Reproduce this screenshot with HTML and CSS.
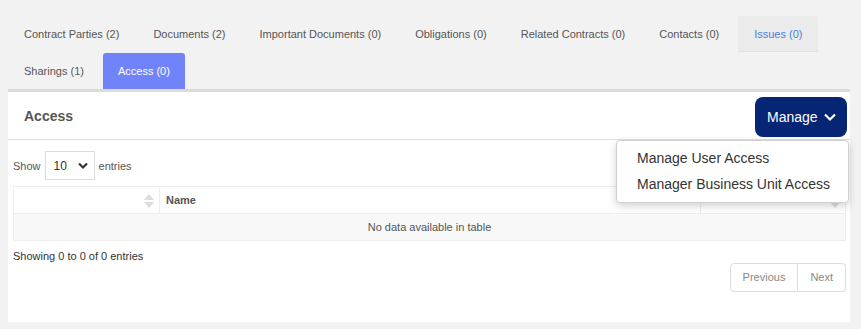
FILE: index.html
```html
<!DOCTYPE html>
<html>
	<head>
		<meta charset="utf-8" />
		<title>Access</title>
		<link rel="stylesheet" href="styles.css">
	</head>
	<body>
		<!--tabs-->
		<ul class="tabs">
			<li><a href="javascript:;">Contract Parties (2)</a></li>
			<li><a href="javascript:;">Documents (2)</a></li>
			<li><a href="javascript:;">Important Documents (0)</a></li>
			<li><a href="javascript:;">Obligations (0)</a></li>
			<li><a href="javascript:;">Related Contracts (0)</a></li>
			<li><a href="javascript:;">Contacts (0)</a></li>
			<li class="hover"><a href="javascript:;">Issues (0)</a></li>
			<li class="break"></li>
			<li><a href="javascript:;">Sharings (1)</a></li>
			<li class="current"><a href="javascript:;">Access (0)</a></li>
		</ul>
		<!--panel-->
		<div class="panel">
			<div class="panel-head">
				<h3>Access</h3>
				<div class="manage">
					<button class="manage-btn">Manage
						<svg width="14" height="10" viewBox="0 0 14 10"><path d="M2 2.5 L7 7.5 L12 2.5" fill="none" stroke="#fff" stroke-width="2.2"/></svg>
					</button>
					<ul class="menu">
						<li><a href="javascript:;">Manage User Access</a></li>
						<li><a href="javascript:;">Manager Business Unit Access</a></li>
					</ul>
				</div>
			</div>
			<div class="panel-body">
				<div class="length">
					<span>Show</span>
					<div class="select">
						<span>10</span>
						<svg width="12" height="8" viewBox="0 0 12 8"><path d="M2 1.5 L6 5.5 L10 1.5" fill="none" stroke="#333" stroke-width="2.2"/></svg>
					</div>
					<span>entries</span>
				</div>
				<table class="grid">
					<thead>
						<tr>
							<th class="c1"><i class="sort"></i></th>
							<th class="c2">Name</th>
							<th class="c3"><i class="sort down"></i></th>
						</tr>
					</thead>
					<tbody>
						<tr><td colspan="3" class="empty">No data available in table</td></tr>
					</tbody>
				</table>
				<p class="info">Showing 0 to 0 of 0 entries</p>
				<div class="pager">
					<a href="javascript:;">Previous</a><a href="javascript:;">Next</a>
				</div>
			</div>
		</div>
	</body>
</html>
```

FILE: styles.css
```css
body,div,ul,li,p,h3,table,th,td,button{
	margin: 0;
	padding: 0;
}
li{
	list-style: none;
}
a{
	text-decoration: none;
	color: inherit;
}
body{
	padding: 16px 11px 7px 8px;
	background: #f2f2f2;
	font-family: "Liberation Sans", Arial, sans-serif;
	font-size: 11px;
	color: #555;
}
.tabs{
	display: flex;
	flex-wrap: wrap;
	padding-left: 1px;
}
.tabs li{
	margin-right: 4px;
}
.tabs li.break{
	flex-basis: 100%;
	height: 1px;
	margin: 0;
}
.tabs li a{
	display: block;
	height: 36px;
	line-height: 36px;
	padding: 0 15px;
	border-radius: 3px 3px 0 0;
}
.tabs li.hover a{
	padding: 0 16px;
	background: #ebebeb;
	border-bottom: 1px solid #e0e0e0;
	height: 35px;
	line-height: 36px;
	color: #4a7fdf;
}
.tabs li.current a{
	background: #7183f8;
	color: #fff;
}
.panel{
	background: #fff;
	border-top: 3px solid #dcdcdc;
	height: 230px;
}
.panel-head{
	display: flex;
	justify-content: space-between;
	align-items: center;
	height: 47px;
	padding: 0 3px 0 16px;
	border-bottom: 1px solid #e0e0e0;
}
.panel-head h3{
	font-size: 14px;
	color: #555;
}
.manage{
	position: relative;
	margin-top: 2px;
}
.manage-btn{
	display: flex;
	align-items: center;
	gap: 5px;
	height: 40px;
	width: 92px;
	padding-left: 12px;
	border: 0;
	border-radius: 8px;
	background: #062574;
	color: #fff;
	font-family: "Liberation Sans", Arial, sans-serif;
	font-size: 14px;
}
.menu{
	position: absolute;
	right: -2px;
	top: 43px;
	width: 231px;
	padding: 4px 0 5px;
	background: #fff;
	border: 1px solid #d0d0d0;
	border-radius: 4px;
	box-shadow: 0 3px 8px rgba(0,0,0,0.18);
	z-index: 10;
}
.menu li a{
	display: block;
	padding: 0 20px;
	line-height: 26px;
	font-size: 14px;
	color: #333;
	white-space: nowrap;
}
.panel-body{
	padding: 11px 4px 0 5px;
}
.length{
	display: flex;
	align-items: center;
	gap: 4px;
}
.select{
	display: flex;
	align-items: center;
	justify-content: space-between;
	width: 50px;
	height: 29px;
	padding: 0 5px 0 8px;
	box-sizing: border-box;
	border: 1px solid #ddd;
	font-size: 12px;
	color: #333;
}
.grid{
	width: 100%;
	margin-top: 6px;
	border-collapse: collapse;
	border-top: 1px solid #eee;
	border-left: 1px solid #eee;
}
.grid th{
	position: relative;
	height: 26px;
	text-align: left;
	padding: 0 6px;
	color: #555;
	border-right: 1px solid #eee;
	border-bottom: 1px solid #eee;
}
.grid .c1{
	width: 133px;
}
.grid .c2{
	width: 528px;
}
.sort{
	position: absolute;
	right: 5px;
	top: 7px;
	width: 0;
	height: 0;
	border: 5px solid transparent;
	border-bottom: 6px solid #ddd;
	border-top: 0;
}
.sort:after{
	content: "";
	position: absolute;
	left: -5px;
	top: 8px;
	border: 5px solid transparent;
	border-top: 6px solid #ddd;
	border-bottom: 0;
}
.sort.down{
	border-bottom-color: transparent;
}
.grid td.empty{
	height: 26px;
	text-align: center;
	background: #f8f8f8;
	border-bottom: 1px solid #eee;
	border-right: 1px solid #eee;
}
.info{
	margin-top: 8px;
	color: #333;
	line-height: 14px;
}
.pager{
	display: flex;
	justify-content: flex-end;
	margin-top: 0;
}
.pager a{
	display: block;
	height: 27px;
	line-height: 27px;
	padding: 0 12px;
	border: 1px solid #ddd;
	color: #888;
}
.pager a:first-child{
	border-radius: 4px 0 0 4px;
}
.pager a:last-child{
	border-left: 0;
	padding: 0 12px;
	border-radius: 0 4px 4px 0;
}
```
